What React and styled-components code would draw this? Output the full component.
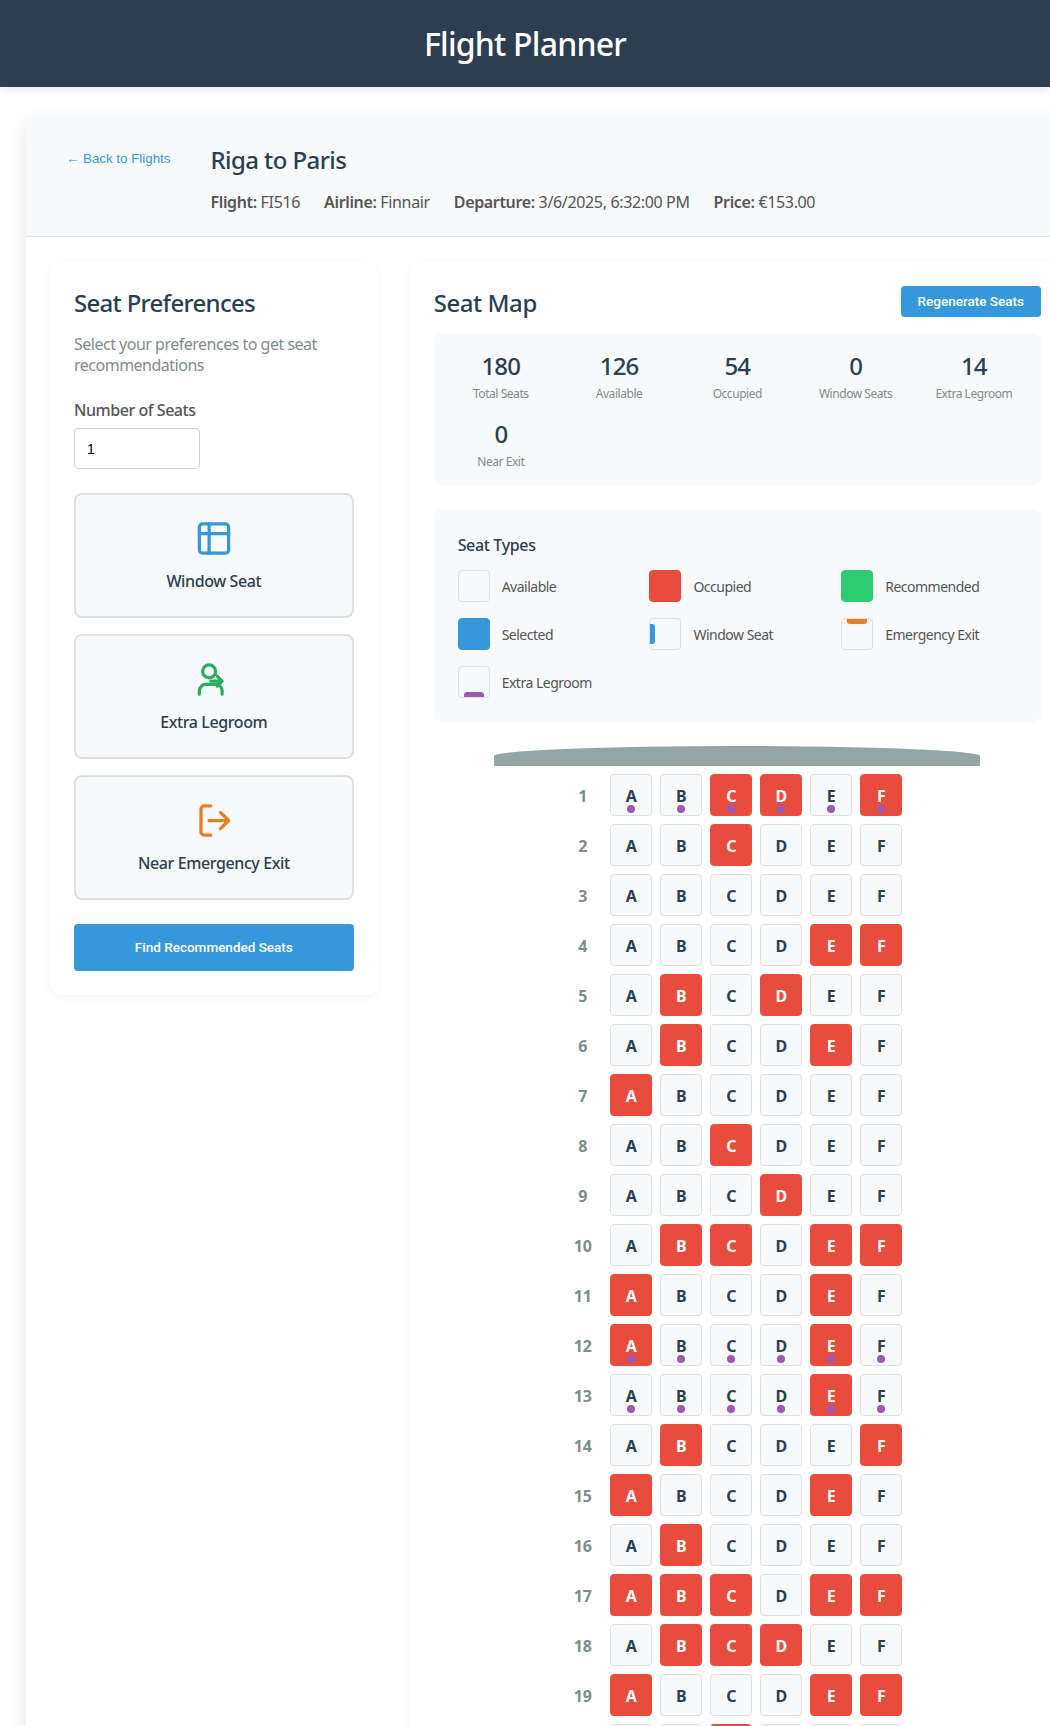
import React from 'react';
import styled, { createGlobalStyle } from 'styled-components';

const UI_FONT = '"Noto Sans", "Open Sans", sans-serif';
const SYSTEM_FONT = '"Liberation Sans", Arial, sans-serif';

const GlobalStyle = createGlobalStyle`
  html, body {
    margin: 0;
    padding: 0;
    overflow: hidden;
    background: #fff;
    font-family: ${UI_FONT};
    color: #333;
  }
  * { box-sizing: border-box; }
`;

const Page = styled.div`
  height: 100vh;
  overflow: hidden;
`;

const TopBar = styled.header`
  position: relative;
  z-index: 2;
  height: 87px;
  display: flex;
  align-items: center;
  justify-content: center;
  background: #2c3e50;
  color: #fff;
  box-shadow: 0 2px 10px rgba(0, 0, 0, 0.1);
`;

const AppTitle = styled.h1`
  margin: 0;
  font-size: 32px;
  font-weight: 500;
  line-height: 42px;
  letter-spacing: -0.8px;
`;

const Main = styled.main`
  padding: 32px 0 0 26px;
`;

const Card = styled.div`
  width: 1063px;
  background: #fff;
  border-radius: 8px;
  box-shadow: 0 4px 20px rgba(0, 0, 0, 0.1);
`;

const FlightHeader = styled.div`
  display: flex;
  gap: 40px;
  padding: 24px 40px 22px;
  background: #f8f9fa;
  border-bottom: 1px solid #e0e0e0;
  border-radius: 8px 8px 0 0;
`;

const BackLink = styled.a`
  padding-top: 8px;
  font-family: ${SYSTEM_FONT};
  font-size: 13.33px;
  line-height: 16px;
  color: #3498db;
  text-decoration: none;
`;

const FlightTitle = styled.h2`
  margin: 0 0 14px;
  font-size: 24px;
  font-weight: 500;
  line-height: 34px;
  color: #2c3e50;
  letter-spacing: -0.57px;
`;

const FlightMeta = styled.div`
  display: flex;
  gap: 24px;
  font-size: 16px;
  line-height: 23px;
  color: #555;
  letter-spacing: -0.35px;

  strong { font-weight: 600; }
`;

const Columns = styled.div`
  display: grid;
  grid-template-columns: 1fr 2fr;
  gap: 32px;
  padding: 24px;
  align-items: start;
`;

const Panel = styled.section`
  padding: 24px;
  background: #fff;
  border-radius: 12px;
  box-shadow: 0 2px 10px rgba(0, 0, 0, 0.05);
`;

const PanelTitle = styled.h2`
  margin: 0 0 -3px;
  font-size: 24px;
  font-weight: 500;
  line-height: 35px;
  color: #2c3e50;
  letter-spacing: ${(p) => p.$spacing};
`;

const Hint = styled.p`
  margin: 17px 0 24px;
  font-size: 16px;
  line-height: 21px;
  color: #7f8c8d;
  letter-spacing: -0.5px;
`;

const FieldLabel = styled.label`
  display: block;
  margin-bottom: 7px;
  font-size: 16px;
  font-weight: 500;
  line-height: 21px;
  color: #555;
  letter-spacing: -0.45px;
`;

const NumberInput = styled.input`
  display: block;
  width: 126px;
  height: 41px;
  padding: 12px;
  border: 1px solid #ced4da;
  border-radius: 4px;
  background: #fff;
  font-family: ${SYSTEM_FONT};
  font-size: 14px;
  color: #000;
`;

const PreferenceList = styled.div`
  display: flex;
  flex-direction: column;
  gap: 16px;
  margin: 24px 0;
`;

const PreferenceCard = styled.div`
  display: flex;
  flex-direction: column;
  align-items: center;
  height: 125px;
  padding: 24px;
  background: #f8f9fa;
  border: 2px solid #e0e0e0;
  border-radius: 8px;
  font-size: 16px;
  font-weight: 500;
  line-height: 21px;
  color: #2c3e50;
  letter-spacing: -0.4px;

  svg { margin-bottom: 13px; color: ${(p) => p.$tone}; }
`;

const Button = styled.button`
  border: none;
  border-radius: 4px;
  background: #3498db;
  color: #fff;
  font-family: Roboto, ${SYSTEM_FONT};
  font-size: 13.5px;
  font-weight: 500;
  line-height: 15px;
`;

const WideButton = styled(Button)`
  display: block;
  width: 100%;
  height: 47px;
`;

const SmallButton = styled(Button)`
  height: 31px;
  padding: 0 17px;
`;

const MapHeader = styled.div`
  display: flex;
  align-items: center;
  justify-content: space-between;
  margin-bottom: 16px;
`;

const StatsBox = styled.div`
  display: grid;
  grid-template-columns: repeat(5, 1fr);
  gap: 16px;
  padding: 17px 16px 15px;
  margin-bottom: 24px;
  background: #f8f9fa;
  border-radius: 8px;
`;

const Stat = styled.div`
  text-align: center;
`;

const StatValue = styled.div`
  margin-bottom: 4px;
  font-size: 24px;
  font-weight: 500;
  line-height: 32px;
  color: #2c3e50;
  letter-spacing: -0.9px;
`;

const StatLabel = styled.div`
  font-size: 12px;
  line-height: 16px;
  color: #7f8c8d;
  letter-spacing: -0.45px;
`;

const LegendBox = styled.div`
  padding: 24px;
  background: #f8f9fa;
  border-radius: 8px;
`;

const LegendTitle = styled.h3`
  margin: 0 0 12px;
  font-size: 16px;
  font-weight: 500;
  line-height: 25px;
  color: #2c3e50;
  letter-spacing: -0.35px;
`;

const LegendGrid = styled.div`
  display: grid;
  grid-template-columns: repeat(3, 1fr);
  gap: 16px;
`;

const LegendItem = styled.div`
  display: flex;
  align-items: center;
  gap: 12px;
  font-size: 14px;
  color: #555;
  letter-spacing: -0.5px;
`;

const Swatch = styled.span`
  position: relative;
  flex: none;
  width: 32px;
  height: 32px;
  overflow: hidden;
  border: 1px solid ${(p) => p.$border || '#e0e0e0'};
  border-radius: 4px;
  background: ${(p) => p.$fill || '#f8f9fa'};
`;

const WindowMark = styled.span`
  position: absolute;
  left: -1px;
  top: 5px;
  width: 6px;
  height: 20px;
  border-radius: 0 3px 3px 0;
  background: #3498db;
`;

const ExitMark = styled.span`
  position: absolute;
  top: -1px;
  left: 5px;
  width: 20px;
  height: 6px;
  border-radius: 0 0 3px 3px;
  background: #e67e22;
`;

const LegroomMark = styled.span`
  position: absolute;
  bottom: -1px;
  left: 5px;
  width: 20px;
  height: 6px;
  border-radius: 3px 3px 0 0;
  background: #9b59b6;
`;

const Fuselage = styled.div`
  width: 80%;
  height: 20px;
  margin: 24px auto 8px;
  background: #95a5a6;
  border-radius: 50% 50% 0 0;
`;

const SeatRows = styled.div`
  display: flex;
  flex-direction: column;
  gap: 8px;
`;

const SeatRow = styled.div`
  display: flex;
  justify-content: center;
  align-items: center;
  gap: 8px;
`;

const RowNumber = styled.div`
  display: flex;
  justify-content: center;
  width: 20px;
  margin-right: 9px;
  padding-top: 3px;
  font-size: 16px;
  font-weight: 700;
  line-height: 21px;
  color: #7f8c8d;
  white-space: nowrap;
`;

const Seat = styled.div`
  position: relative;
  display: flex;
  align-items: center;
  justify-content: center;
  width: 42px;
  height: 42px;
  padding: 2px 0 0 1px;
  border: 1px solid ${(p) => (p.$occupied ? '#e74c3c' : '#e0e0e0')};
  border-radius: 4px;
  background: ${(p) => (p.$occupied ? '#e74c3c' : '#f8f9fa')};
  color: ${(p) => (p.$occupied ? '#fff' : '#2c3e50')};
  font-size: 16px;
  font-weight: 700;
`;

const LegroomDot = styled.span`
  position: absolute;
  bottom: 2px;
  left: 50%;
  width: 8px;
  height: 8px;
  margin-left: -4px;
  border-radius: 50%;
  background: #9b59b6;
`;

const Icon = ({ children }) => (
  <svg width="40" height="40" viewBox="0 0 24 24" fill="none" stroke="currentColor" strokeWidth="2" strokeLinecap="round" strokeLinejoin="round">
    {children}
  </svg>
);

const preferences = [
  {
    label: 'Window Seat',
    tone: '#3498db',
    icon: (
      <>
        <rect x="3" y="3" width="18" height="18" rx="2" />
        <path d="M3 9h18M9 3v18" />
      </>
    )
  },
  {
    label: 'Extra Legroom',
    tone: '#27ae60',
    icon: (
      <>
        <circle cx="9" cy="7" r="4" />
        <path d="M3 21v-2a4 4 0 0 1 4-4h6a4 4 0 0 1 4 4v2" />
        <path d="M10 13h7M14 10l3 3-3 3" />
      </>
    )
  },
  {
    label: 'Near Emergency Exit',
    tone: '#e67e22',
    icon: (
      <>
        <path d="M10 3H6a2 2 0 0 0-2 2v14a2 2 0 0 0 2 2h4" />
        <path d="M9 12h12M16 7l5 5-5 5" />
      </>
    )
  }
];

const stats = [
  ['180', 'Total Seats'],
  ['126', 'Available'],
  ['54', 'Occupied'],
  ['0', 'Window Seats'],
  ['14', 'Extra Legroom'],
  ['0', 'Near Exit']
];

const occupiedByRow = [
  'CDF', 'C', '', 'EF', 'BD', 'BE', 'A', 'C', 'D', 'BCEF',
  'AE', 'AE', 'E', 'BF', 'AE', 'B', 'ABCEF', 'BCD', 'AEF', 'C'
];

const legroomRows = [1, 12, 13];
const seatLetters = ['A', 'B', 'C', 'D', 'E', 'F'];

const App = () => (
  <Page>
    <GlobalStyle />
    <TopBar>
      <AppTitle>Flight Planner</AppTitle>
    </TopBar>
    <Main>
      <Card>
        <FlightHeader>
          <BackLink href="#flights">← Back to Flights</BackLink>
          <div>
            <FlightTitle>Riga to Paris</FlightTitle>
            <FlightMeta>
              <span><strong>Flight:</strong> FI516</span>
              <span><strong>Airline:</strong> Finnair</span>
              <span><strong>Departure:</strong> 3/6/2025, 6:32:00 PM</span>
              <span><strong>Price:</strong> €153.00</span>
            </FlightMeta>
          </div>
        </FlightHeader>

        <Columns>
          <Panel>
            <PanelTitle $spacing="-0.7px">Seat Preferences</PanelTitle>
            <Hint>Select your preferences to get seat recommendations</Hint>
            <FieldLabel htmlFor="seat-count">Number of Seats</FieldLabel>
            <NumberInput id="seat-count" type="number" defaultValue="1" />
            <PreferenceList>
              {preferences.map((pref) => (
                <PreferenceCard key={pref.label} $tone={pref.tone}>
                  <Icon>{pref.icon}</Icon>
                  {pref.label}
                </PreferenceCard>
              ))}
            </PreferenceList>
            <WideButton>Find Recommended Seats</WideButton>
          </Panel>

          <Panel>
            <MapHeader>
              <PanelTitle $spacing="-0.45px">Seat Map</PanelTitle>
              <SmallButton>Regenerate Seats</SmallButton>
            </MapHeader>

            <StatsBox>
              {stats.map(([value, label]) => (
                <Stat key={label}>
                  <StatValue>{value}</StatValue>
                  <StatLabel>{label}</StatLabel>
                </Stat>
              ))}
            </StatsBox>

            <LegendBox>
              <LegendTitle>Seat Types</LegendTitle>
              <LegendGrid>
                <LegendItem><Swatch />Available</LegendItem>
                <LegendItem><Swatch $fill="#e74c3c" $border="#e0493a" />Occupied</LegendItem>
                <LegendItem><Swatch $fill="#2ecc71" $border="#2ecc71" />Recommended</LegendItem>
                <LegendItem><Swatch $fill="#3498db" $border="#3498db" />Selected</LegendItem>
                <LegendItem><Swatch><WindowMark /></Swatch>Window Seat</LegendItem>
                <LegendItem><Swatch><ExitMark /></Swatch>Emergency Exit</LegendItem>
                <LegendItem><Swatch><LegroomMark /></Swatch>Extra Legroom</LegendItem>
              </LegendGrid>
            </LegendBox>

            <Fuselage />

            <SeatRows>
              {occupiedByRow.map((occupied, i) => (
                <SeatRow key={i}>
                  <RowNumber>{i + 1}</RowNumber>
                  {seatLetters.map((letter) => (
                    <Seat key={letter} $occupied={occupied.includes(letter)}>
                      {letter}
                      {legroomRows.includes(i + 1) && <LegroomDot />}
                    </Seat>
                  ))}
                </SeatRow>
              ))}
            </SeatRows>
          </Panel>
        </Columns>
      </Card>
    </Main>
  </Page>
);

export default App;
